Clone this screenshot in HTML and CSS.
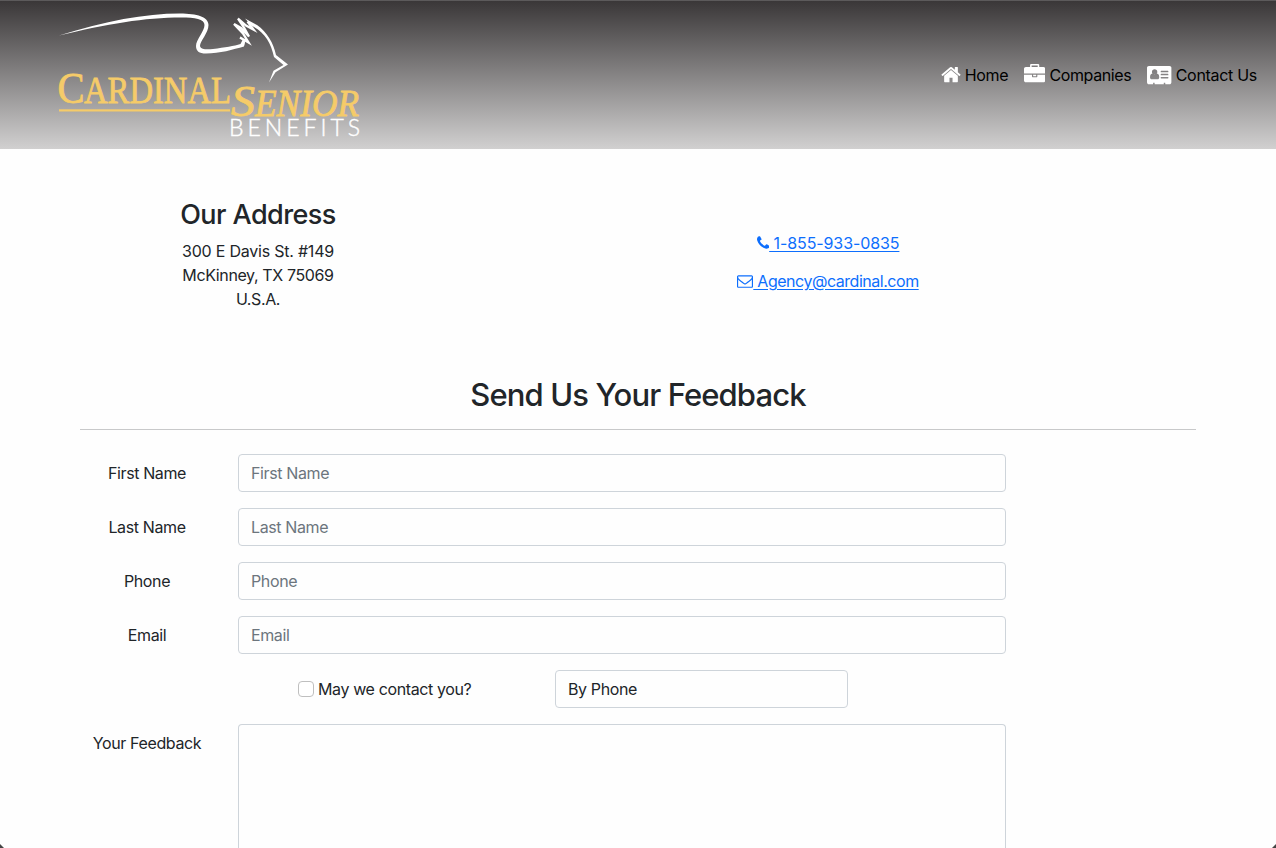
FILE: index.html
```html
<!DOCTYPE html>
<html lang="en">
<head>
<meta charset="utf-8">
<title>Cardinal Senior Benefits</title>
<link rel="stylesheet" href="styles.css">
</head>
<body>
<header class="navbar">
  <svg class="logo" width="310" height="148" viewBox="54 0 310 148" role="img" aria-label="Cardinal Senior Benefits">
    <path fill="#fff" d="M59 35.500C105 21 145 13.500 180 13.500C197 13.500 208.500 17 208.500 25C208.500 33 200 41 200 46C201 50 208 49.500 213 49C225 47.500 234 46 240.500 44L242.500 40L245 42L244 46.500C233 49.500 220 53.500 206 53.500C199 53.500 196 51 196 46C196 40 204.500 31 204.500 25C204.500 19 195 17.500 181 17.500C145 17.500 107 24 59 35.500Z"/>
    <path class="crest" d="M243 45L244 40L240 37.500L248.500 42.500L243 33.500L234 24L241 28L249 36.500L244 27.500L238 18.500L246 25.500L253.500 29.500L247.500 21.500"/>
    <path fill="#fff" d="M245 18.500L257 25C267 32 273.500 43 276 55L288 64.500L275.500 72.300L269 82.500L273.500 70.800L283.500 65L274 57C271 43 264.500 32 252 26Z"/>
    <g class="logo-gold">
      <text x="57.500" y="103" font-size="44" textLength="27" lengthAdjust="spacingAndGlyphs">C</text>
      <text x="84" y="103" font-size="38" textLength="147" lengthAdjust="spacingAndGlyphs">ARDINAL</text>
      <rect x="59" y="109.300" width="171" height="2.200"/>
      <g font-style="italic">
        <text x="231" y="116" font-size="44" textLength="24" lengthAdjust="spacingAndGlyphs">S</text>
        <text x="255" y="116" font-size="38" textLength="104" lengthAdjust="spacingAndGlyphs">ENIOR</text>
      </g>
    </g>
    <text class="logo-sub" x="229" y="136" font-size="23" textLength="131">BENEFITS</text>
  </svg>
  <nav class="links">
    <a class="nav-link" href="#"><svg class="nav-icon home" viewBox="0 0 1664 1792"><path d="M1408 992v480q0 26-19 45t-45 19H960v-384H704v384H320q-26 0-45-19t-19-45V992q0-1 .5-3t.5-3l575-474 575 474q1 2 1 6zm223-69l-62 74q-8 9-21 11h-3q-13 0-21-7L832 424 140 1001q-12 8-24 7-13-2-21-11l-62-74q-8-10-7-23.500T37 878L756 279q32-26 76-26t76 26l244 204V288q0-14 9-23t23-9h192q14 0 23 9t9 23v408l219 182q10 8 11 21.500t-7 23.500z"/></svg><span>Home</span></a>
    <a class="nav-link" href="#"><svg class="nav-icon case" viewBox="0 0 1792 1792"><path d="M640 256h512V128H640v128zm1152 640v480q0 66-47 113t-113 47H160q-66 0-113-47T0 1376V896h672v160q0 26 19 45t45 19h320q26 0 45-19t19-45V896h672zm-768 0v128H768V896h256zm768-480v384H0V416q0-66 47-113t113-47h352V96q0-40 28-68t68-28h576q40 0 68 28t28 68v160h352q66 0 113 47t47 113z"/></svg><span>Companies</span></a>
    <a class="nav-link" href="#"><svg class="nav-icon card" viewBox="0 0 2048 1792"><path d="M1024 1131q0-64-9-117.500t-29.500-103-60.500-78-97-28.500q-6 4-30 18t-37.500 21.500-35.500 17.500-43 14.500-42 4.500-42-4.500-43-14.500-35.500-17.500-37.500-21.500-30-18q-57 0-97 28.500t-60.500 78-29.500 103-9 117.500 37 106.500 91 42.500h512q54 0 91-42.500t37-106.500zM867 669q0-94-66.500-160.500T640 442t-160.500 66.500T413 669t66.500 160.500T640 896t160.500-66.500T867 669zm925 509v-64q0-14-9-23t-23-9h-576q-14 0-23 9t-9 23v64q0 14 9 23t23 9h576q14 0 23-9t9-23zm0-260v-56q0-15-10.500-25.500T1756 826h-568q-15 0-25.500 10.500T1152 862v56q0 15 10.500 25.500T1188 954h568q15 0 25.500-10.500T1792 918zm0-252v-64q0-14-9-23t-23-9h-576q-14 0-23 9t-9 23v64q0 14 9 23t23 9h576q14 0 23-9t9-23zm256-346v1216q0 66-47 113t-113 47h-352v-96q0-14-9-23t-23-9h-64q-14 0-23 9t-9 23v96H640v-96q0-14-9-23t-23-9h-64q-14 0-23 9t-9 23v96H160q-66 0-113-47T0 1536V320q0-66 47-113t113-47h1728q66 0 113 47t47 113z"/></svg><span>Contact Us</span></a>
  </nav>
</header>
<main class="container">
  <section class="info">
    <address class="address">
      <h3>Our Address</h3>
      <div class="street">300 E Davis St. #149</div>
      <div>McKinney, TX 75069</div>
      <div>U.S.A.</div>
    </address>
    <div class="contact">
      <a class="contact-link" href="#"><svg class="icon phone" viewBox="192 0 1408 1792"><path d="M1600 1240q0 27-10 70.500t-21 68.500q-21 50-122 106-94 51-186 51-27 0-53-3.500t-57.500-12.500-47-14.500T1048 1486t-49-18q-98-35-175-83-127-79-264-216T344 905q-48-77-83-175-3-9-18-49t-20.500-55.500-14.500-47T196 521t-3.500-53q0-92 51-186 56-101 106-122 25-11 68.500-21T489 129q14 0 21 3 18 6 53 76 11 19 30 54t35 63.500 31 53.500q3 4 17.500 25t21.500 35.500 7 28.500q0 20-28.500 50T615 573t-62 53-28.500 46q0 9 5 22.500t8.500 20.500 14 24 11.500 19q76 137 174 235t235 174q2 1 19 11.500t24 14 20.500 8.500 22.500 5q18 0 46-28.500t53-62 55-62 50-28.500q14 0 28.500 7t35.500 21.500 25 17.500q25 15 53.500 31t63.500 35 54 30q70 35 76 53 3 7 3 21z"/></svg><span class="phone-text">&nbsp;1-855-933-0835</span></a>
      <a class="contact-link" href="#"><svg class="icon mail" viewBox="0 0 1792 1792"><path d="M1664 1504V736q-32 36-69 66-268 206-426 338-51 43-83 67t-86.500 48.500T897 1280h-2q-48 0-102.500-24.500T706 1207t-83-67Q465 1008 197 802q-37-30-69-66v768q0 13 9.500 22.500t22.500 9.500h1472q13 0 22.500-9.500t9.500-22.500zm0-1051v-24.500l-.5-13-3-12.500-5.500-9-9-7.500-14-2.500H160q-13 0-22.500 9.500T128 416q0 168 147 284 193 152 401 317 6 5 35 29.500t46 37.500 44.500 31.500T852 1143t43 9h2q20 0 43-9t50.500-27.500T1035 1084t46-37.500 35-29.500q208-165 401-317 54-43 100.500-115.500T1664 453zm128-37v1088q0 66-47 113t-113 47H160q-66 0-113-47T0 1504V416q0-66 47-113t113-47h1472q66 0 113 47t47 113z"/></svg><span class="mail-text">&nbsp;Agency@cardinal.com</span></a>
    </div>
  </section>
  <h2>Send Us Your Feedback</h2>
  <form class="form">
    <div class="row"><label for="first">First Name</label><input class="control" id="first" placeholder="First Name"></div>
    <div class="row"><label for="last">Last Name</label><input class="control" id="last" placeholder="Last Name"></div>
    <div class="row"><label for="phone">Phone</label><input class="control" id="phone" placeholder="Phone"></div>
    <div class="row"><label for="email">Email</label><input class="control" id="email" placeholder="Email"></div>
    <div class="row contact-row">
      <label class="check"><input type="checkbox"><span>May we contact you?</span></label>
      <select class="control"><option>By Phone</option><option>By Email</option></select>
    </div>
    <div class="row"><label for="feedback">Your Feedback</label><textarea class="control" id="feedback"></textarea></div>
  </form>
</main>
<i class="corner left"></i><i class="corner right"></i>
</body>
</html>
```
FILE: styles.css
```css
* { box-sizing: border-box; }
html, body { height: 100%; }
body {
  margin: 0;
  overflow: hidden;
  background: #fefefe;
  color: #212529;
  font: 16px/24px Inter, "Liberation Sans", sans-serif;
  letter-spacing: -0.38px;
}
.navbar {
  height: 149px;
  padding: 0 19px 0 54px;
  border-top: 1px solid #5c5a5b;
  background: linear-gradient(#3a3738, #d1d0d0);
  display: flex;
  justify-content: space-between;
  align-items: center;
}
.logo { display: block; align-self: flex-start; margin-top: -1px; }
.crest { fill: none; stroke: #fff; stroke-width: 2.3; stroke-miterlimit: 6; }
.logo-gold { fill: #f5cb69; stroke: #f5cb69; stroke-width: .8; font-family: "Liberation Serif", serif; letter-spacing: 0; }
.logo-gold rect { stroke: none; }
.logo-sub { fill: #fff; stroke: #fff; stroke-width: .4; font-family: Lato, sans-serif; font-weight: 300; letter-spacing: 0; }
.links { display: flex; gap: 16px; }
.nav-link { display: flex; align-items: center; gap: 4px; color: #000; text-decoration: none; white-space: nowrap; }
.nav-link:last-child { letter-spacing: -.3px; }
.nav-icon { height: 21.33px; fill: #fff; fill-rule: evenodd; flex: none; }
.home { width: 20px; }
.case { width: 21.33px; }
.card { width: 24.4px; }
.container { width: 1116px; margin: 0 auto; }
.info { display: flex; height: 226px; padding-top: 48px; }
.address { flex: none; width: 356px; text-align: center; font-style: normal; }
.street { letter-spacing: -.22px; }
h3 { margin: 0 0 7px; padding-top: 1px; font-size: 27px; line-height: 34px; font-weight: 500; letter-spacing: -.55px; }
.contact { flex: none; width: 784px; padding-top: 34px; display: flex; flex-direction: column; gap: 14px; align-items: center; }
.contact-link { color: #0d6efd; display: flex; align-items: center; text-decoration: none; }
.contact-link span { text-decoration: underline; text-underline-offset: 2px; }
.phone-text { letter-spacing: -.1px; }
.mail-text { letter-spacing: -.47px; }
.icon { height: 16px; fill: #0d6efd; }
.phone { width: 12.6px; }
.mail { width: 16px; }
h2 { margin: 0 0 24px; height: 55px; border-bottom: 1px solid #c8c9ca; text-align: center; font-size: 31px; line-height: 39px; font-weight: 500; letter-spacing: -.88px; }
.form { display: flex; flex-direction: column; gap: 16px; }
.row { display: flex; align-items: flex-start; }
.row > label:not(.check) { width: 134px; margin-right: 24px; padding: 7px 0; text-align: center; }
.control {
  width: 768px; height: 38px; padding: 6px 12px;
  border: 1px solid #ced4da; border-radius: 4px;
  background: #fefefe; color: #212529;
  font: inherit; letter-spacing: inherit;
  appearance: none; display: block;
}
.control::placeholder { color: #6c757d; opacity: 1; }
textarea.control { height: 124px; border-bottom: 0; border-radius: 4px 4px 0 0; resize: none; }
.contact-row { padding-left: 218px; }
.check { width: 257px; display: flex; align-items: center; gap: 4px; height: 38px; }
.check input { appearance: none; width: 16px; height: 16px; margin: 0; border: 1px solid #bfbfbf; border-radius: 4px; background: #fff; }
select.control { width: 293px; }
.corner { position: fixed; bottom: 0; width: 4px; height: 4px; }
.left { left: 0; background: linear-gradient(45deg, #444 45%, transparent 55%); }
.right { right: 0; background: linear-gradient(-45deg, #444 45%, transparent 55%); }
```
